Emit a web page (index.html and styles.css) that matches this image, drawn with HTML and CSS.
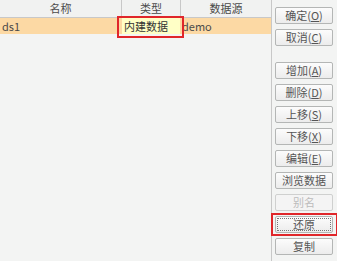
FILE: index.html
```html
<!DOCTYPE html>
<html lang="en">
<head>
	<meta charset="UTF-8">
	<title>数据集</title>
	<link rel="stylesheet" href="styles.css">
</head>
<body>
	<div class="wrap">
		<div class="grid">
			<div class="head">
				<div class="c1">名称</div>
				<div class="c2">类型</div>
				<div class="c3">数据源</div>
			</div>
			<div class="row">
				<div class="c1 left">ds1</div>
				<div class="c2 left edit">内建数据</div>
				<div class="c3 left">demo</div>
			</div>
		</div>
		<div class="btns">
			<div class="btn">确定(<u>O</u>)</div>
			<div class="btn">取消(<u>C</u>)</div>
			<div class="btn gap">增加(<u>A</u>)</div>
			<div class="btn">删除(<u>D</u>)</div>
			<div class="btn">上移(<u>S</u>)</div>
			<div class="btn">下移(<u>X</u>)</div>
			<div class="btn">编辑(<u>E</u>)</div>
			<div class="btn">浏览数据</div>
			<div class="btn off">别名</div>
			<div class="mark"><div class="btn focus">还原</div></div>
			<div class="btn">复制</div>
		</div>
	</div>
</body>
</html>
```
FILE: styles.css
```css
body{margin: 0; background: #f3f4f3; font-family: "Noto Sans CJK SC", "Liberation Sans", sans-serif; font-size: 11px; color: #4a4a4a;}
u{text-decoration: underline;}

.wrap{display: flex; width: 337px; height: 261px;}

.grid{width: 271px; border-right: 1px solid #c8c8c8; flex: none;}
.head, .row{display: flex;}
.head{height: 17px; line-height: 16px; border-bottom: 1px solid #c8c8c8; background: #f1f2f1;}
.head > div{text-align: center; border-right: 1px solid #c8c8c8;}
.head > div:last-child{border-right: none;}
.c1{width: 121px;}
.c2{width: 58px;}
.c3{flex: 1;}
.row{height: 16px; line-height: 16px; background: #fcd9a4;}
.row .left{padding-left: 2px;}
.row .c1{width: 120px;}
.row .c2{width: 56px;}
.edit{position: relative; background: #ffffc6; color: #333;}
.edit::after{content: ""; position: absolute; left: -5px; top: -2px; right: -4px; bottom: -4px; border: 2px solid #e0262a;}

.btns{display: flex; flex-direction: column; gap: 5px; padding: 7px 0 0 3px;}
.btn{width: 58px; height: 17px; line-height: 15px; text-align: center; border: 1px solid #b4b6b5; border-radius: 2px; background: linear-gradient(#fcfcfc, #ececec); color: #555; box-sizing: border-box;}
.btn.gap{margin-top: 11px;}
.btn.off{color: #bcbcbc; border-color: #cfd0cf; background: #f4f4f4;}
.mark{margin: -3px -5px -3px -4px; padding: 1px 2px; border: 2px solid #e0262a;}
.btn.focus{outline: 1px dotted #777; outline-offset: -3px;}
```
